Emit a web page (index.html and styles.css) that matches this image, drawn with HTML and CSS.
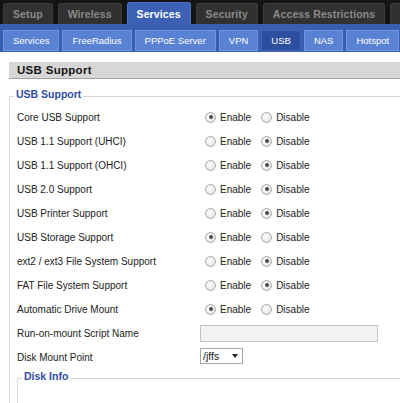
FILE: index.html
```html
<!DOCTYPE html>
<html>
<head>
<meta charset="utf-8">
<link rel="stylesheet" href="styles.css">
</head>
<body>
<div class="topnav">
  <div class="tab">Setup</div>
  <div class="tab">Wireless</div>
  <div class="tab active">Services</div>
  <div class="tab">Security</div>
  <div class="tab">Access Restrictions</div>
  <div class="tab">NAT / QoS</div>
</div>
<div class="subnav">
  <div class="subtab">Services</div>
  <div class="subtab">FreeRadius</div>
  <div class="subtab">PPPoE Server</div>
  <div class="subtab">VPN</div>
  <div class="subtab active">USB</div>
  <div class="subtab">NAS</div>
  <div class="subtab">Hotspot</div>
</div>
<div class="content">
  <h2 class="header">USB Support</h2>
  <fieldset class="box">
    <legend>USB Support</legend>
    <div class="row"><span class="label">Core USB Support</span><span class="opt"><span class="radio on"></span>Enable</span><span class="opt"><span class="radio"></span>Disable</span></div>
    <div class="row"><span class="label">USB 1.1 Support (UHCI)</span><span class="opt"><span class="radio"></span>Enable</span><span class="opt"><span class="radio on"></span>Disable</span></div>
    <div class="row"><span class="label">USB 1.1 Support (OHCI)</span><span class="opt"><span class="radio"></span>Enable</span><span class="opt"><span class="radio on"></span>Disable</span></div>
    <div class="row"><span class="label">USB 2.0 Support</span><span class="opt"><span class="radio"></span>Enable</span><span class="opt"><span class="radio on"></span>Disable</span></div>
    <div class="row"><span class="label">USB Printer Support</span><span class="opt"><span class="radio"></span>Enable</span><span class="opt"><span class="radio on"></span>Disable</span></div>
    <div class="row"><span class="label">USB Storage Support</span><span class="opt"><span class="radio on"></span>Enable</span><span class="opt"><span class="radio"></span>Disable</span></div>
    <div class="row"><span class="label">ext2 / ext3 File System Support</span><span class="opt"><span class="radio"></span>Enable</span><span class="opt"><span class="radio on"></span>Disable</span></div>
    <div class="row"><span class="label">FAT File System Support</span><span class="opt"><span class="radio"></span>Enable</span><span class="opt"><span class="radio on"></span>Disable</span></div>
    <div class="row"><span class="label">Automatic Drive Mount</span><span class="opt"><span class="radio on"></span>Enable</span><span class="opt"><span class="radio"></span>Disable</span></div>
    <div class="row"><span class="label">Run-on-mount Script Name</span><span class="textbox"></span></div>
    <div class="row"><span class="label">Disk Mount Point</span><span class="select">/jffs<span class="arrow"></span></span></div>
    <fieldset class="box inner">
      <legend>Disk Info</legend>
      <div class="spacer"></div>
    </fieldset>
  </fieldset>
</div>
</body>
</html>
```
FILE: styles.css
```css
html, body {
  margin: 0;
  padding: 0;
  background: #fff;
  overflow: hidden;
}
body {
  font-family: "Liberation Sans", Arial, sans-serif;
  font-size: 10px;
  color: #222;
  width: 400px;
  height: 403px;
}
.topnav {
  background: #141414;
  height: 24px;
  display: flex;
  align-items: flex-end;
  gap: 5px;
  padding-left: 3px;
  white-space: nowrap;
  overflow: hidden;
}
.tab {
  background: #313131;
  border: 1px solid #3c3c3c;
  border-bottom: none;
  border-radius: 3px 3px 0 0;
  height: 20px;
  line-height: 21px;
  padding: 0 9px;
  color: #8a8a8a;
  font-weight: bold;
  font-size: 10.5px;
  letter-spacing: 0.1px;
  flex-shrink: 0;
}
.tab.active {
  background: #3b60b4;
  border-color: #4a70c4;
  color: #fff;
  height: 21px;
  line-height: 22px;
}
.subnav {
  background: #3a5fb2;
  height: 28px;
  box-sizing: border-box;
  padding: 6px 0 0 3px;
  display: flex;
  gap: 3px;
  white-space: nowrap;
  overflow: hidden;
}
.subtab {
  background: #5a82d4;
  border: 1px solid #7096de;
  color: #fff;
  font-size: 9.5px;
  height: 19px;
  line-height: 20px;
  padding: 0 9px;
  flex-shrink: 0;
}
.subtab.active {
  background: #2e4f9f;
  border-color: #4565b3;
}
.content {
  padding-left: 9px;
}
.header {
  margin: 10px 0 0 0;
  height: 16px;
  line-height: 16px;
  background: #d7d7d7;
  border-bottom: 1px solid #a2a2a2;
  font-size: 11.5px;
  font-weight: bold;
  padding-left: 8px;
  color: #151515;
  letter-spacing: 0.3px;
}
.box {
  margin: 9px 0 0 0;
  padding: 0 0 0 7px;
  border: none;
  border-top: 1px solid #d8d8d8;
  border-left: 1px solid #d8d8d8;
}
.box legend {
  color: #2f4d9e;
  font-weight: bold;
  font-size: 10.5px;
  line-height: 12px;
  padding: 0 2px 5px 2px;
  margin-left: -3px;
}
.row {
  display: flex;
  align-items: center;
  height: 24px;
}
.label {
  width: 183px;
  flex-shrink: 0;
}
.opt {
  display: flex;
  align-items: center;
  margin-right: 10px;
}
.radio {
  width: 11px;
  height: 11px;
  border-radius: 50%;
  border: 1px solid #a5a5a5;
  background: radial-gradient(circle at 40% 40%, #fff, #dcdcdc);
  margin: 0 4px 0 5px;
  box-sizing: border-box;
  position: relative;
}
.opt + .opt .radio {
  margin-left: 0;
}
.radio.on::after {
  content: "";
  position: absolute;
  left: 2.5px;
  top: 2.5px;
  width: 4px;
  height: 4px;
  border-radius: 50%;
  background: #4a4a4a;
}
.textbox {
  width: 178px;
  height: 17px;
  box-sizing: border-box;
  border: 1px solid #c4c4c4;
  background: #f2f2f2;
}
.select {
  display: flex;
  align-items: center;
  justify-content: space-between;
  width: 43px;
  height: 16px;
  box-sizing: border-box;
  border: 1px solid #a8a8a8;
  padding: 0 4px 0 2px;
  font-size: 10.5px;
  margin-top: -3px;
}
.arrow {
  width: 0;
  height: 0;
  border-left: 3.5px solid transparent;
  border-right: 3.5px solid transparent;
  border-top: 4px solid #222;
}
.inner {
  margin-top: 1px;
}
.spacer {
  height: 30px;
}
```
